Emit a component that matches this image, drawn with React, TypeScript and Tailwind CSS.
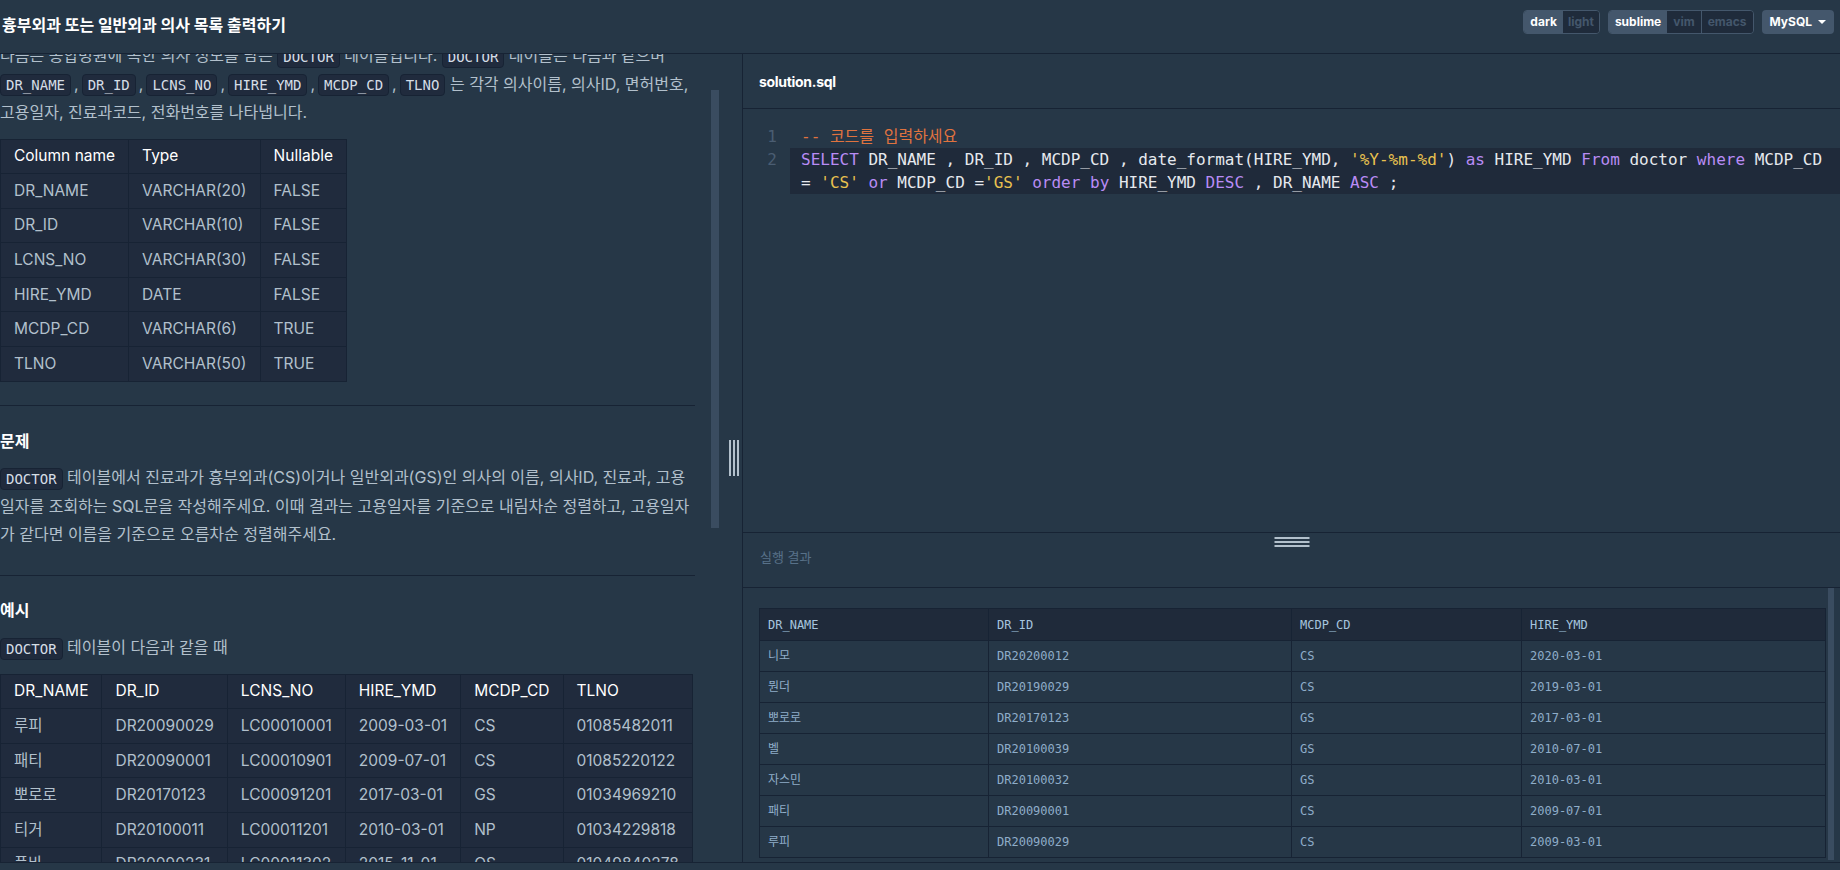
import React from "react";

type Tok = [string, "kw" | "str" | "txt"];

const codeLine2: Tok[] = [
  ["SELECT", "kw"],
  [" DR_NAME , DR_ID , MCDP_CD , date_format(HIRE_YMD, ", "txt"],
  ["'%Y-%m-%d'", "str"],
  [") ", "txt"],
  ["as", "kw"],
  [" HIRE_YMD ", "txt"],
  ["From", "kw"],
  [" doctor ", "txt"],
  ["where", "kw"],
  [" MCDP_CD = ", "txt"],
  ["'CS'", "str"],
  [" ", "txt"],
  ["or", "kw"],
  [" MCDP_CD =", "txt"],
  ["'GS'", "str"],
  [" ", "txt"],
  ["order by", "kw"],
  [" HIRE_YMD ", "txt"],
  ["DESC", "kw"],
  [" , DR_NAME ", "txt"],
  ["ASC", "kw"],
  [" ;", "txt"],
];

const schema = [
  ["DR_NAME", "VARCHAR(20)", "FALSE"],
  ["DR_ID", "VARCHAR(10)", "FALSE"],
  ["LCNS_NO", "VARCHAR(30)", "FALSE"],
  ["HIRE_YMD", "DATE", "FALSE"],
  ["MCDP_CD", "VARCHAR(6)", "TRUE"],
  ["TLNO", "VARCHAR(50)", "TRUE"],
];

const example = [
  ["루피", "DR20090029", "LC00010001", "2009-03-01", "CS", "01085482011"],
  ["패티", "DR20090001", "LC00010901", "2009-07-01", "CS", "01085220122"],
  ["뽀로로", "DR20170123", "LC00091201", "2017-03-01", "GS", "01034969210"],
  ["티거", "DR20100011", "LC00011201", "2010-03-01", "NP", "01034229818"],
  ["품바", "DR20090231", "LC00011302", "2015-11-01", "OS", "01049840278"],
];

const results = [
  ["니모", "DR20200012", "CS", "2020-03-01"],
  ["뭔더", "DR20190029", "CS", "2019-03-01"],
  ["뽀로로", "DR20170123", "GS", "2017-03-01"],
  ["벨", "DR20100039", "GS", "2010-07-01"],
  ["자스민", "DR20100032", "GS", "2010-03-01"],
  ["패티", "DR20090001", "CS", "2009-07-01"],
  ["루피", "DR20090029", "CS", "2009-03-01"],
];

function Code({ children }: { children: React.ReactNode }) {
  return (
    <code className="inline-block align-middle h-[22px] leading-[20px] px-[5px] rounded-[4px] border border-[#172334] bg-[#202b3d] text-[#d5dde6] text-[14px] font-['DejaVu_Sans_Mono',monospace]">
      {children}
    </code>
  );
}

// comma between inline code badges
function Sep() {
  return <span className="mx-[3px]">,</span>;
}

function DataTable({ head, rows }: { head: string[]; rows: string[][] }) {
  return (
    <table className="mt-[12px] border-collapse bg-[#202b3d] text-[15.5px] leading-[22px] whitespace-nowrap">
      <thead>
        <tr className="h-[34.6px]">
          {head.map((h) => (
            <th key={h} className="border border-[#172334] px-[13px] text-left font-normal text-white">
              {h}
            </th>
          ))}
        </tr>
      </thead>
      <tbody>
        {rows.map((row) => (
          <tr key={row[0] + row[1]} className="h-[34.6px]">
            {row.map((c, i) => (
              <td key={i} className="border border-[#172334] px-[13px]">
                {c}
              </td>
            ))}
          </tr>
        ))}
      </tbody>
    </table>
  );
}

function LeftPane() {
  return (
    <div className="relative w-[720px] shrink-0 overflow-hidden">
      <div className="w-[695px] -mt-[13px] text-[16px] leading-[28.5px] text-[#b2c0cc]">
        <p className="w-[704px]">
          다음은 종합병원에 속한 의사 정보를 담은 <Code>DOCTOR</Code> 테이블입니다. <Code>DOCTOR</Code> 테이블은 다음과 같으며{" "}
          <Code>DR_NAME</Code>
          <Sep />
          <Code>DR_ID</Code>
          <Sep />
          <Code>LCNS_NO</Code>
          <Sep />
          <Code>HIRE_YMD</Code>
          <Sep />
          <Code>MCDP_CD</Code>
          <Sep />
          <Code>TLNO</Code> 는 각각 의사이름, 의사ID, 면허번호, 고용일자, 진료과코드, 전화번호를 나타냅니다.
        </p>

        <DataTable head={["Column name", "Type", "Nullable"]} rows={schema} />

        <hr className="mt-[23px] border-t border-[#172334]" />

        <h5 className="mt-[21px] font-bold text-white">문제</h5>
        <p className="mt-[8px]">
          <Code>DOCTOR</Code> 테이블에서 진료과가 흉부외과(CS)이거나 일반외과(GS)인 의사의 이름, 의사ID, 진료과, 고용일자를 조회하는 SQL문을 작성해주세요. 이때 결과는 고용일자를 기준으로 내림차순 정렬하고, 고용일자가 같다면 이름을 기준으로 오름차순 정렬해주세요.
        </p>

        <hr className="mt-[26px] border-t border-[#172334]" />

        <h5 className="mt-[20px] font-bold text-white">예시</h5>
        <p className="mt-[9px]">
          <Code>DOCTOR</Code> 테이블이 다음과 같을 때
        </p>

        <DataTable head={["DR_NAME", "DR_ID", "LCNS_NO", "HIRE_YMD", "MCDP_CD", "TLNO"]} rows={example} />
      </div>

      {/* scrollbar thumb */}
      <div className="absolute left-[711px] top-[36px] w-[8px] h-[438px] bg-[#3a4c60]" />
    </div>
  );
}

function RightPane() {
  return (
    <div className="flex-1 min-w-0 flex flex-col border-l border-[#172334]">
      <div className="h-[55px] shrink-0 flex items-center pl-[16px] border-b border-[#172334]">
        <span className="text-[14px] font-bold text-white tracking-[-0.3px]">solution.sql</span>
      </div>

      <div className="h-[424px] shrink-0 pt-[16px] border-b border-[#172334] font-['DejaVu_Sans_Mono','Noto_Sans_CJK_KR',monospace] text-[16px] leading-[23px]">
        <div className="flex">
          <div className="w-[47px] shrink-0 text-right pr-[13px] text-[#4a5d72]">1</div>
          <div className="flex-1 pl-[11px] pr-[10px] text-[#e0733f]">-- 코드를 입력하세요</div>
        </div>
        <div className="flex">
          <div className="w-[47px] shrink-0 text-right pr-[13px] text-[#4a5d72]">2</div>
          <div className="flex-1 pl-[11px] pr-[10px] bg-[#1f2a3a] text-[#e6e9ee] whitespace-pre-wrap">
            {codeLine2.map(([t, k], i) => (
              <span
                key={i}
                className={k === "kw" ? "text-[#b98cf5]" : k === "str" ? "text-[#e8c14f]" : undefined}
              >
                {t}
              </span>
            ))}
          </div>
        </div>
      </div>

      <div className="relative h-[55px] shrink-0 flex items-center pl-[17px] border-b border-[#172334]">
        <div className="absolute left-1/2 top-[4px] -translate-x-1/2 w-[35px] flex flex-col gap-[2px]">
          <div className="h-[2px] bg-[#b2c0cc]" />
          <div className="h-[2px] bg-[#b2c0cc]" />
          <div className="h-[2px] bg-[#b2c0cc]" />
        </div>
        <span className="mt-[-4px] text-[13px] text-[#587189]">실행 결과</span>
      </div>

      <div className="relative flex-1 min-h-0 overflow-hidden pt-[20px] pl-[16px] pr-[14px] font-['DejaVu_Sans_Mono','Noto_Sans_CJK_KR',monospace] text-[12px]">
        <table className="w-full table-fixed border-collapse">
          <colgroup>
            <col className="w-[229px]" />
            <col className="w-[303px]" />
            <col className="w-[230px]" />
            <col />
          </colgroup>
          <thead>
            <tr className="h-[32px] bg-[#1f2a3a]">
              {["DR_NAME", "DR_ID", "MCDP_CD", "HIRE_YMD"].map((h) => (
                <th key={h} className="border border-[#172334] pl-[8px] text-left font-normal text-[#a6c4de]">
                  {h}
                </th>
              ))}
            </tr>
          </thead>
          <tbody>
            {results.map((row) => (
              <tr key={row[1]} className="h-[31px]">
                {row.map((c, i) => (
                  <td key={i} className="border border-[#172334] pl-[8px] text-[#8fadc9]">
                    {c}
                  </td>
                ))}
              </tr>
            ))}
          </tbody>
        </table>
        <div className="absolute right-[6px] top-0 bottom-[2px] w-[6px] bg-[#3a4c60]" />
      </div>
    </div>
  );
}

export default function App() {
  return (
    <div className="w-[1840px] h-[870px] overflow-hidden flex flex-col bg-[#263747] font-['Inter','Noto_Sans_CJK_KR',sans-serif]">
      <header className="h-[54px] shrink-0 flex items-start justify-between pl-[2px] pr-[6px] border-b border-[#172334]">
        <h1 className="mt-[13px] text-[16px] leading-[24px] font-bold text-white">
          흉부외과 또는 일반외과 의사 목록 출력하기
        </h1>
        <div className="mt-[10px] flex items-center gap-2 text-[12px] font-bold">
          <div className="flex h-[24px] rounded-[4px] border border-[#44576c] overflow-hidden">
            <button className="px-[6px] bg-[#44576c] text-white">dark</button>
            <button className="px-[5px] bg-[#1f2b3b] text-[#44576c]">light</button>
          </div>
          <div className="flex h-[24px] rounded-[4px] border border-[#44576c] overflow-hidden">
            <button className="px-[6px] bg-[#44576c] text-white">sublime</button>
            <button className="px-[6px] bg-[#1f2b3b] text-[#44576c]">vim</button>
            <button className="px-[6px] bg-[#1f2b3b] text-[#44576c] border-l border-[#44576c]">emacs</button>
          </div>
          <button className="flex h-[24px] items-center gap-[6px] rounded-[4px] bg-[#44576c] px-[8px] text-white">
            MySQL
            <span className="w-0 h-0 border-l-[4px] border-r-[4px] border-t-[4px] border-l-transparent border-r-transparent border-t-white" />
          </button>
        </div>
      </header>

      <div className="flex-1 min-h-0 flex">
        <LeftPane />
        <div className="w-[22px] shrink-0 flex items-center pl-[9px]">
          <div className="flex gap-[2px] h-[36px]">
            <div className="w-[2px] bg-[#b2c0cc]" />
            <div className="w-[2px] bg-[#b2c0cc]" />
            <div className="w-[2px] bg-[#b2c0cc]" />
          </div>
        </div>
        <RightPane />
      </div>

      <footer className="h-[8px] shrink-0 border-t border-[#172334]" />
    </div>
  );
}
